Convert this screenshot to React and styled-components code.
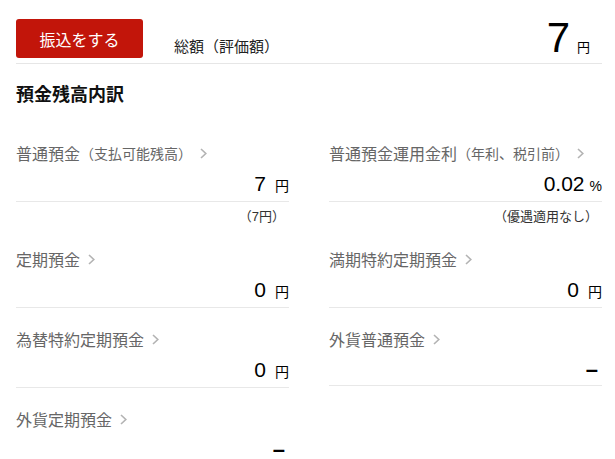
import React from "react";
import styled, { createGlobalStyle } from "styled-components";

const GlobalStyle = createGlobalStyle`
  html, body {
    margin: 0;
    padding: 0;
    background: #ffffff;
    overflow: hidden;
  }
  body {
    font-family: "Liberation Sans", "Noto Sans CJK JP", sans-serif;
    color: #222222;
  }
`;

const balances = [
  { label: "普通預金", sub: "（支払可能残高）", value: "7", unit: "円", note: "（7円）" },
  { label: "普通預金運用金利", sub: "（年利、税引前）", value: "0.02", unit: "%", note: "（優遇適用なし）" },
  { label: "定期預金", value: "0", unit: "円" },
  { label: "満期特約定期預金", value: "0", unit: "円" },
  { label: "為替特約定期預金", value: "0", unit: "円" },
  { label: "外貨普通預金" },
  { label: "外貨定期預金" },
];

const Page = styled.div`
  padding: 0 13px 0 16px;
`;

const Header = styled.header`
  display: flex;
  align-items: flex-end;
  height: 64px;
  box-sizing: border-box;
  padding-top: 19px;
  border-bottom: 1px solid #e6e6e6;
`;

const TransferButton = styled.button`
  align-self: flex-start;
  width: 127px;
  height: 39px;
  border: none;
  border-radius: 3px;
  background: #c2150a;
  color: #ffffff;
  font-family: inherit;
  font-size: 16px;
  cursor: pointer;
`;

const TotalLabel = styled.span`
  margin: 0 0 6px 31px;
  font-size: 15px;
  line-height: 20px;
  color: #222222;
`;

const TotalAmount = styled.div`
  margin: 0 12px 4px auto;
  font-size: 42px;
  line-height: 1;
  color: #000000;
`;

const Unit = styled.span`
  margin-left: ${(p) => p.$gap}px;
  font-size: ${(p) => p.$size}px;
  color: #000000;
`;

const SectionTitle = styled.h2`
  margin: 18px 0 0;
  font-size: 18px;
  line-height: 26px;
  font-weight: 700;
  color: #111111;
`;

const Grid = styled.div`
  display: grid;
  grid-template-columns: 1fr 1fr;
  column-gap: 40px;
  row-gap: 20px;
  margin-top: 34px;
`;

const Item = styled.div``;

const Label = styled.div`
  display: flex;
  align-items: center;
  height: 22px;
  font-size: 16px;
  color: #666666;
  white-space: nowrap;
`;

const Sub = styled.span`
  font-size: 14px;
`;

const Chevron = styled.svg`
  margin-left: 8px;
  flex: none;
`;

const ValueLine = styled.div`
  margin-top: 8px;
  padding-bottom: 3px;
  border-bottom: 1px solid #e8e8e8;
  text-align: right;
  font-size: 21px;
  line-height: 24px;
  color: #000000;
`;

const Dash = styled.span`
  margin-right: 4px;
  font-weight: 700;
  font-size: 22px;
`;

const Note = styled.div`
  margin: 6px 0 2px;
  padding-right: 4px;
  text-align: right;
  font-size: 13px;
  line-height: 18px;
  color: #333333;
`;

function ChevronIcon() {
  return (
    <Chevron width="7" height="11" viewBox="0 0 7 11">
      <polyline
        points="1,1 5.8,5.5 1,10"
        fill="none"
        stroke="#b3b3b3"
        strokeWidth="1.6"
      />
    </Chevron>
  );
}

function BalanceItem({ item }) {
  return (
    <Item>
      <Label>
        {item.label}
        {item.sub && <Sub>{item.sub}</Sub>}
        <ChevronIcon />
      </Label>
      <ValueLine>
        {item.value ? (
          <>
            {item.value}
            <Unit $size={14} $gap={item.unit === "%" ? 5 : 9}>
              {item.unit}
            </Unit>
          </>
        ) : (
          <Dash>–</Dash>
        )}
      </ValueLine>
      {item.note && <Note>{item.note}</Note>}
    </Item>
  );
}

function App() {
  return (
    <Page>
      <GlobalStyle />
      <Header>
        <TransferButton>振込をする</TransferButton>
        <TotalLabel>総額（評価額）</TotalLabel>
        <TotalAmount>
          7
          <Unit $size={13} $gap={7}>
            円
          </Unit>
        </TotalAmount>
      </Header>
      <SectionTitle>預金残高内訳</SectionTitle>
      <Grid>
        {balances.map((item) => (
          <BalanceItem key={item.label} item={item} />
        ))}
      </Grid>
    </Page>
  );
}

export default App;
